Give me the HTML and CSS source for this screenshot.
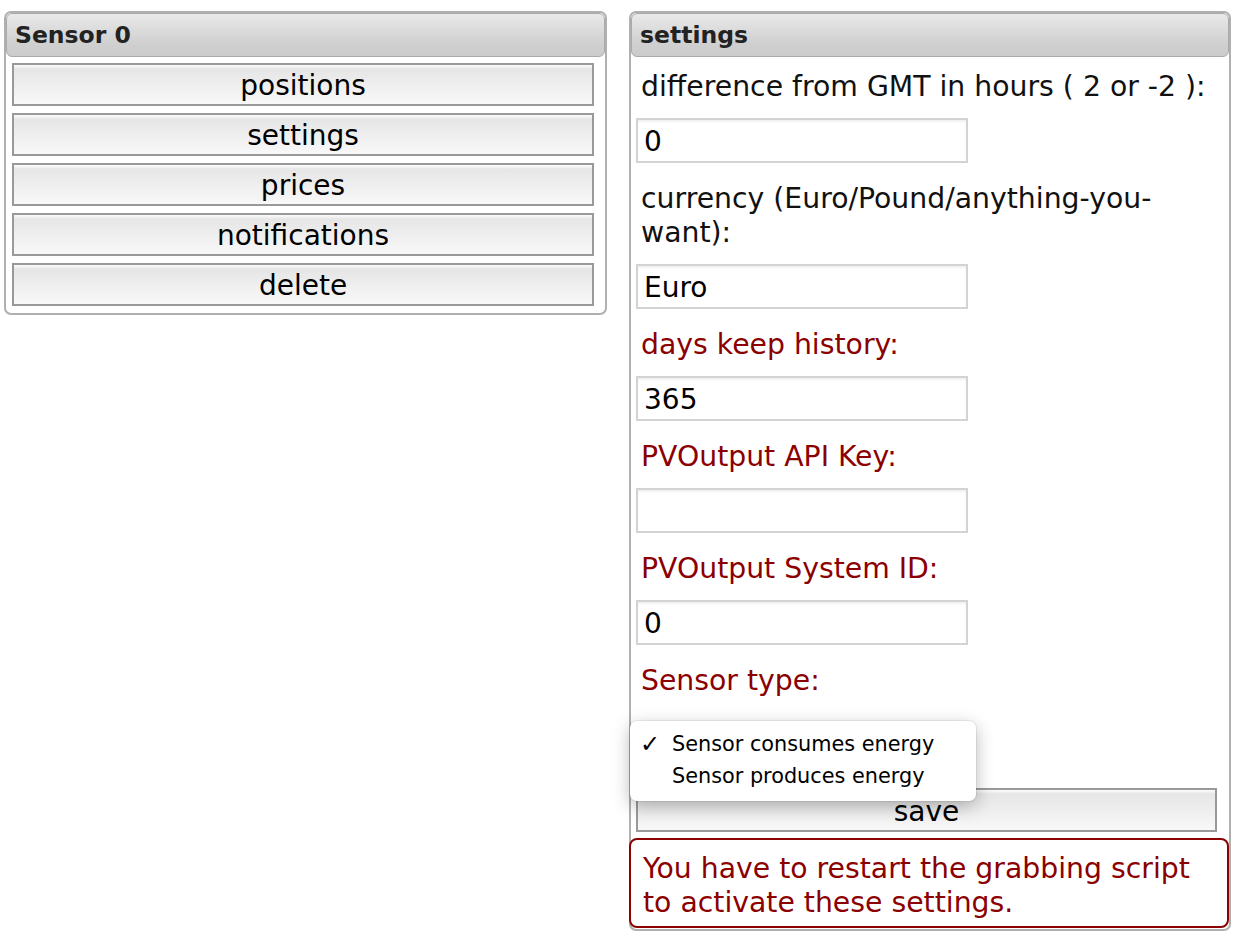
FILE: index.html
```html
<!DOCTYPE html>
<html lang="en">
<head>
<meta charset="utf-8">
<title>Sensor 0 settings</title>
<link rel="stylesheet" href="styles.css">
</head>
<body>
<div class="page">
  <section class="panel panel-sensor">
    <h2 class="panel-header">Sensor 0</h2>
    <div class="menu">
      <button class="btn">positions</button>
      <button class="btn">settings</button>
      <button class="btn">prices</button>
      <button class="btn">notifications</button>
      <button class="btn">delete</button>
    </div>
  </section>
  <section class="panel panel-settings">
    <h2 class="panel-header">settings</h2>
    <div class="form">
      <label class="field-label">difference from GMT in hours ( 2 or -2 ):</label>
      <div class="input">0</div>
      <label class="field-label">currency (Euro/Pound/anything-you-want):</label>
      <div class="input">Euro</div>
      <label class="field-label warn">days keep history:</label>
      <div class="input">365</div>
      <label class="field-label warn">PVOutput API Key:</label>
      <div class="input"></div>
      <label class="field-label warn">PVOutput System ID:</label>
      <div class="input">0</div>
      <label class="field-label warn">Sensor type:</label>
      <div class="select-wrap">
        <ul class="popup">
          <li class="popup-item checked"><span class="check">✓</span>Sensor consumes energy</li>
          <li class="popup-item"><span class="check"></span>Sensor produces energy</li>
        </ul>
      </div>
      <button class="btn btn-save">save</button>
      <div class="notice">You have to restart the grabbing script to activate these settings.</div>
    </div>
  </section>
</div>
</body>
</html>
```
FILE: styles.css
```css
html, body {
  margin: 0;
  padding: 0;
  background: #fff;
}
body {
  font-family: "DejaVu Sans", Verdana, sans-serif;
  color: #000;
}
.page {
  display: flex;
  align-items: flex-start;
  gap: 22px;
  padding: 11px 0 0 4px;
}
.panel {
  box-sizing: border-box;
  border: 2px solid #b0b0b0;
  border-radius: 7px;
  background: #fff;
}
.panel-sensor {
  width: 603px;
  padding-bottom: 7px;
}
.panel-settings {
  width: 602px;
  padding-bottom: 1px;
}
.panel-header {
  box-sizing: border-box;
  height: 44px;
  margin: 0;
  padding: 0 8px;
  border: 1px solid #aaa;
  border-radius: 6px;
  background: linear-gradient(#e9e9e9, #d0d0d0 70%, #cbcbcb);
  font-size: 23.5px;
  font-weight: bold;
  line-height: 43px;
  color: #222;
}
.menu {
  display: flex;
  flex-direction: column;
  gap: 7px;
  padding: 6px 0 0 6px;
}
.btn {
  box-sizing: border-box;
  display: block;
  width: 582px;
  height: 43px;
  margin: 0;
  padding: 2px 0 0;
  border: 2px solid #999;
  border-radius: 0;
  background: linear-gradient(#fdfdfd 0, #e6e6e6 4px, #ececec 40%, #f8f8f8 100%);
  font-family: "DejaVu Sans", Verdana, sans-serif;
  font-size: 28px;
  line-height: 37px;
  color: #000;
  text-align: center;
}
.form {
  display: flex;
  flex-direction: column;
  align-items: flex-start;
  padding: 12px 0 0 5px;
}
.field-label {
  display: block;
  padding: 1px 8px 0 5px;
  margin-bottom: -1px;
  font-size: 28.3px;
  line-height: 34px;
  color: #111;
}
.field-label.warn {
  color: #8b0000;
}
.input {
  box-sizing: border-box;
  width: 332px;
  height: 45px;
  margin: 15px 0 18px;
  padding: 0 6px;
  border: 2px solid #d3d3d3;
  box-shadow: inset 0 2px 2px rgba(0, 0, 0, 0.06);
  font-size: 28px;
  line-height: 43px;
  color: #000;
}
.select-wrap {
  position: relative;
  width: 332px;
  height: 60px;
  margin-top: 15px;
}
.popup {
  position: absolute;
  top: 9px;
  left: -6px;
  box-sizing: border-box;
  width: 346px;
  height: 80px;
  margin: 0;
  padding: 7px 0 0;
  list-style: none;
  background: #fff;
  border-radius: 7px;
  box-shadow: 0 5px 18px rgba(0, 0, 0, 0.28), 0 0 0 1px rgba(0, 0, 0, 0.06);
}
.popup-item {
  display: flex;
  align-items: center;
  height: 32px;
  padding-left: 10px;
  font-size: 20.8px;
  color: #000;
  white-space: nowrap;
}
.check {
  display: inline-block;
  width: 32px;
  font-size: 24px;
  font-weight: bold;
  line-height: 1;
}
.btn-save {
  width: 581px;
  height: 44px;
  margin-top: 16px;
  border-color: #999;
}
.notice {
  box-sizing: border-box;
  width: 600px;
  margin: 6px 0 0 -7px;
  padding: 12px 12px 6px 12px;
  border: 2px solid #8b0000;
  border-radius: 8px;
  font-size: 28.3px;
  line-height: 34px;
  color: #8b0000;
}
```
